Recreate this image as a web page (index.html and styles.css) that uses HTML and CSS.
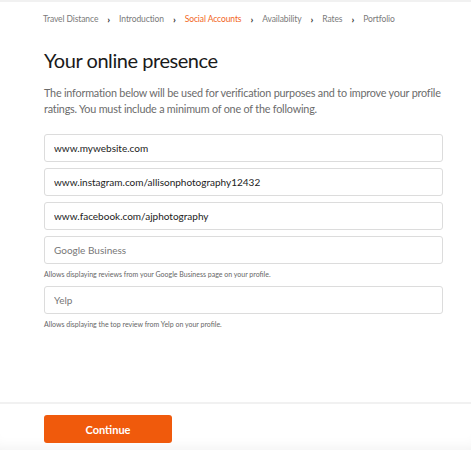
FILE: index.html
```html
<!DOCTYPE html>
<html lang="en">
<head>
  <meta charset="UTF-8" />
  <meta name="viewport" content="width=device-width, initial-scale=1" />
  <title>Your online presence</title>
  <link rel="stylesheet" href="styles.css">
</head>
<body>
  <div class="page">
    <nav class="steps">
      <span class="step">Travel Distance</span>
      <span class="sep">&rsaquo;</span>
      <span class="step">Introduction</span>
      <span class="sep">&rsaquo;</span>
      <span class="step active">Social Accounts</span>
      <span class="sep">&rsaquo;</span>
      <span class="step">Availability</span>
      <span class="sep">&rsaquo;</span>
      <span class="step">Rates</span>
      <span class="sep">&rsaquo;</span>
      <span class="step">Portfolio</span>
    </nav>

    <main class="content">
      <h1 class="title">Your online presence</h1>
      <p class="intro">
        The information below will be used for verification purposes and to improve your profile
        ratings. You must include a minimum of one of the following.
      </p>

      <div class="fields">
        <input class="field" type="text" value="www.mywebsite.com">
        <input class="field" type="text" value="www.instagram.com/allisonphotography12432">
        <input class="field" type="text" value="www.facebook.com/ajphotography">
        <div class="field-group">
          <input class="field" type="text" placeholder="Google Business">
          <div class="hint">Allows displaying reviews from your Google Business page on your profile.</div>
        </div>
        <div class="field-group">
          <input class="field" type="text" placeholder="Yelp">
          <div class="hint">Allows displaying the top review from Yelp on your profile.</div>
        </div>
      </div>
    </main>

    <footer class="footer">
      <button class="btn-continue" type="button">Continue</button>
    </footer>
  </div>
</body>
</html>
```

FILE: styles.css
```css
html, body {
  margin: 0;
  padding: 0;
  background: #ffffff;
  font-family: 'Lato', 'Open Sans', sans-serif;
  color: #222222;
}

.page {
  height: 450px;
  display: flex;
  flex-direction: column;
  border-top: 2px solid #f1f1f1;
  box-sizing: border-box;
  overflow: hidden;
}

.steps {
  display: flex;
  align-items: center;
  gap: 8px;
  padding: 10px 28px 0 43px;
  height: 13px;
  font-size: 8.5px;
  letter-spacing: -0.1px;
  color: #7a7a7a;
  white-space: nowrap;
}

.step.active {
  color: #f26522;
}

.sep {
  font-weight: bold;
  color: #333333;
  font-size: 10px;
  margin: 0 1px;
}

.content {
  flex: 1;
  padding: 0 28px 0 44px;
}

.title {
  margin: 21px 0 0;
  font-size: 20px;
  font-weight: 400;
  line-height: 28px;
  letter-spacing: -0.45px;
  color: #1a1a1a;
}

.intro {
  margin: 11px 0 0;
  font-size: 10.8px;
  line-height: 16px;
  letter-spacing: -0.2px;
  color: #6b6b6b;
}

.fields {
  margin-top: 17px;
  display: flex;
  flex-direction: column;
  gap: 6px;
}

.field {
  display: block;
  width: 100%;
  height: 28px;
  box-sizing: border-box;
  border: 1px solid #dcdcdc;
  border-radius: 3px;
  padding: 0 9px;
  font-family: inherit;
  font-size: 10px;
  color: #222222;
  background: #ffffff;
  outline: none;
}

.field::placeholder {
  color: #777777;
}

.hint {
  margin-top: 4px;
  font-size: 7px;
  line-height: 12px;
  color: #666666;
}

.footer {
  border-top: 2px solid #f1f1f1;
  padding: 11px 28px 7px 44px;
  box-shadow: inset 0 -12px 14px -10px rgba(0, 0, 0, 0.06);
}

.btn-continue {
  width: 128px;
  height: 28px;
  border: none;
  border-radius: 3px;
  background: #f05a0c;
  color: #ffffff;
  font-family: inherit;
  font-size: 11px;
  font-weight: bold;
  cursor: pointer;
}
```
